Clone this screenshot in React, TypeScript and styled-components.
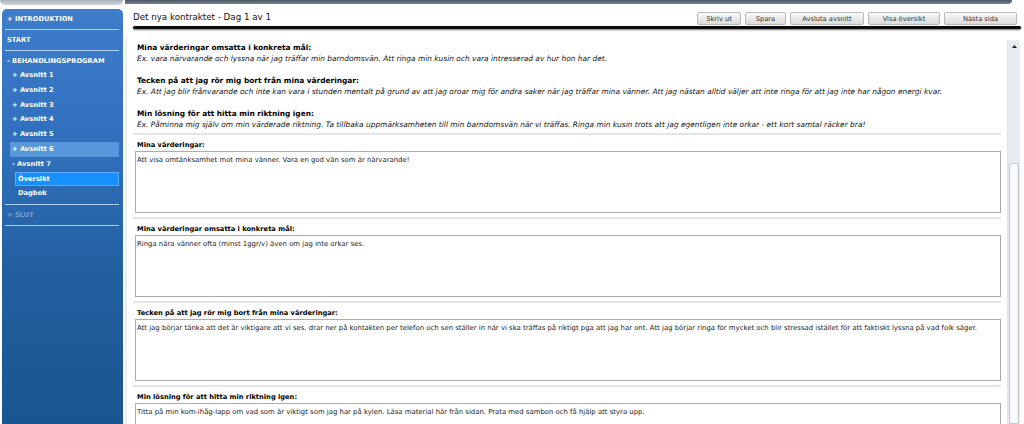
import React from "react";
import styled, { createGlobalStyle } from "styled-components";

const GlobalStyle = createGlobalStyle`
  *, *::before, *::after { box-sizing: border-box; }
  html, body { margin: 0; padding: 0; background: #fff; }
  body { font-family: "DejaVu Sans", Verdana, sans-serif; }
`;

const intro = [
	{
		title: "Mina värderingar omsatta i konkreta mål:",
		example:
			"Ex. vara närvarande och lyssna när jag träffar min barndomsvän. Att ringa min kusin och vara intresserad av hur hon har det.",
	},
	{
		title: "Tecken på att jag rör mig bort från mina värderingar:",
		example:
			"Ex. Att jag blir frånvarande och inte kan vara i stunden mentalt på grund av att jag oroar mig för andra saker när jag träffar mina vänner. Att jag nästan alltid väljer att inte ringa för att jag inte har någon energi kvar.",
	},
	{
		title: "Min lösning för att hitta min riktning igen:",
		example:
			"Ex. Påminna mig själv om min värderade riktning. Ta tillbaka uppmärksamheten till min barndomsvän när vi träffas. Ringa min kusin trots att jag egentligen inte orkar - ett kort samtal räcker bra!",
	},
];

const answers = [
	{
		label: "Mina värderingar:",
		text: "Att visa omtänksamhet mot mina vänner. Vara en god vän som är närvarande!",
	},
	{
		label: "Mina värderingar omsatta i konkreta mål:",
		text: "Ringa nära vänner ofta (minst 1ggr/v) även om jag inte orkar ses.",
	},
	{
		label: "Tecken på att jag rör mig bort från mina värderingar:",
		text: "Att jag börjar tänka att det är viktigare att vi ses, drar ner på kontakten per telefon och sen ställer in när vi ska träffas på riktigt pga att jag har ont. Att jag börjar ringa för mycket och blir stressad istället för att faktiskt lyssna på vad folk säger.",
	},
	{
		label: "Min lösning för att hitta min riktning igen:",
		text: "Titta på min kom-ihåg-lapp om vad som är viktigt som jag har på kylen. Läsa material här från sidan. Prata med sambon och få hjälp att styra upp.",
	},
];

const buttons = [
	{ label: "Skriv ut", w: 44 },
	{ label: "Spara", w: 41 },
	{ label: "Avsluta avsnitt", w: 74 },
	{ label: "Visa översikt", w: 72 },
	{ label: "Nästa sida", w: 73 },
];

const App = () => {
	return (
		<>
			<GlobalStyle />
			<Page>
				<LeftColumn>
					<GrayCap />
					<Sidebar>
						<NavTop>+ INTRODUKTION</NavTop>
						<NavDivider />
						<NavTop>START</NavTop>
						<NavDivider />
						<NavGroupHead>- BEHANDLINGSPROGRAM</NavGroupHead>
						<NavGroup>
							{[1, 2, 3, 4, 5, 6].map((n) => (
								<NavSub key={n} $active={n === 6}>
									+ Avsnitt {n}
								</NavSub>
							))}
							<NavSub>- Avsnitt 7</NavSub>
							<NavLeaf $active>Översikt</NavLeaf>
							<NavLeaf>Dagbok</NavLeaf>
						</NavGroup>
						<NavDivider />
						<NavTop $dim>+ SLUT</NavTop>
						<NavDivider />
					</Sidebar>
				</LeftColumn>
				<Main>
					<TopBar />
					<HeaderRow>
						<PageTitle>Det nya kontraktet - Dag 1 av 1</PageTitle>
						<ButtonBar>
							{buttons.map((b) => (
								<ToolButton key={b.label} $w={b.w}>
									{b.label}
								</ToolButton>
							))}
						</ButtonBar>
					</HeaderRow>
					<HeaderRule />
					<ScrollArea>
						<ScrollBody>
							<Intro>
								{intro.map((item, i) => (
									<IntroItem key={i}>
										<IntroHeading>{item.title}</IntroHeading>
										<IntroExample>{item.example}</IntroExample>
									</IntroItem>
								))}
							</Intro>
							<Separator />
							{answers.map((a, i) => (
								<React.Fragment key={i}>
									<Section>
										<SectionLabel>{a.label}</SectionLabel>
										<Answer readOnly value={a.text} />
									</Section>
									<Separator />
								</React.Fragment>
							))}
						</ScrollBody>
						<ScrollTrack>
							<ScrollArrow>
								<svg width="5" height="3" viewBox="0 0 5 3">
									<path d="M0 3 L2.5 0 L5 3 Z" fill="#222" />
								</svg>
							</ScrollArrow>
							<ScrollGap />
							<ScrollThumb />
						</ScrollTrack>
					</ScrollArea>
				</Main>
			</Page>
		</>
	);
};
export default App;

const Page = styled.div`
	display: flex;
	width: 1024px;
	height: 424px;
	overflow: hidden;
	background: #fff;
`;
const LeftColumn = styled.div`
	width: 125px;
	flex-shrink: 0;
	display: flex;
	flex-direction: column;
`;
const GrayCap = styled.div`
	height: 5px;
	margin-right: 2px;
	background: linear-gradient(#aab5be, #cfd5da);
	border-radius: 0 0 5px 5px;
`;
const Sidebar = styled.nav`
	flex: 1;
	margin: 4px 2px 0 2px;
	display: flex;
	flex-direction: column;
	background: linear-gradient(
		180deg,
		#3e7dcc 0%,
		#3170be 30%,
		#225f9f 65%,
		#1a5590 100%
	);
	border-radius: 5px 5px 0 0;
	color: #fff;
	font-size: 6.7px;
	font-weight: bold;
`;
const NavTop = styled.div<{ $dim?: boolean }>`
	height: 20px;
	line-height: 20px;
	padding-left: 5px;
	color: ${(p) => (p.$dim ? "#7fa3d2" : "#fff")};
	white-space: nowrap;
`;
const NavDivider = styled.div`
	height: 1px;
	margin: 0 4px 0 3px;
	background: #b3cdee;
`;
const NavGroupHead = styled.div`
	height: 17px;
	line-height: 20px;
	padding-left: 5px;
	white-space: nowrap;
`;
const NavGroup = styled.div`
	display: flex;
	flex-direction: column;
	padding-bottom: 3px;
`;
const NavSub = styled.div<{ $active?: boolean }>`
	height: 14.8px;
	line-height: 14.8px;
	margin: 0 4px 0 8px;
	padding-left: 2px;
	background: ${(p) => (p.$active ? "#5797dc" : "transparent")};
`;
const NavLeaf = styled.div<{ $active?: boolean }>`
	height: 14.8px;
	line-height: 12.8px;
	margin: 0 4px 0 13px;
	padding-left: 2px;
	border: 1px solid ${(p) => (p.$active ? "#58acff" : "transparent")};
	background: ${(p) => (p.$active ? "#1590fd" : "transparent")};
`;

const Main = styled.div`
	flex: 1;
	min-width: 0;
	display: flex;
	flex-direction: column;
`;
const TopBar = styled.div`
	height: 4px;
	margin-right: 12px;
	background: linear-gradient(#4a5965, #75858f);
	border-radius: 0 0 6px 0;
`;
const HeaderRow = styled.div`
	height: 21px;
	display: flex;
	align-items: flex-end;
	padding: 0 7px 0 8px;
`;
const PageTitle = styled.div`
	margin-right: auto;
	margin-bottom: 2px;
	font-size: 8.7px;
	line-height: 12px;
	color: #111;
	white-space: nowrap;
`;
const ButtonBar = styled.div`
	display: flex;
	gap: 4px;
`;
const ToolButton = styled.div<{ $w: number }>`
	width: ${(p) => p.$w}px;
	height: 13px;
	display: flex;
	align-items: center;
	justify-content: center;
	font-size: 6.7px;
	color: #333;
	border: 1px solid #b7b9bb;
	border-radius: 2px;
	background: linear-gradient(#fbfbfb, #e9e9e9 50%, #dcdcdc);
	white-space: nowrap;
`;
const HeaderRule = styled.div`
	height: 3px;
	margin: 1px 3px 0 8px;
	background: #0c0c0c;
	border-radius: 2px;
	box-shadow: 0 1px 2px rgba(0, 0, 0, 0.55);
`;

const ScrollArea = styled.div`
	flex: 1;
	min-height: 0;
	margin-top: 9px;
	display: flex;
	border-left: 2px solid #e9eff4;
`;
const ScrollBody = styled.div`
	flex: 1;
	min-width: 0;
	overflow: hidden;
	padding: 3.5px 0 0 6px;
`;
const Intro = styled.div`
	padding: 0 0 3.5px 4px;
`;
const IntroItem = styled.div`
	margin-bottom: 11px;
	&:last-child {
		margin-bottom: 0;
	}
`;
const IntroHeading = styled.div`
	font-size: 7.4px;
	line-height: 11px;
	font-weight: bold;
	color: #000;
`;
const IntroExample = styled.div`
	font-size: 7.45px;
	line-height: 11px;
	font-style: italic;
	color: #111;
`;
const Separator = styled.div`
	height: 2px;
	background: #dfe5ea;
`;
const Section = styled.div`
	padding: 5px 0 4px;
`;
const SectionLabel = styled.div`
	padding-left: 4px;
	margin-bottom: 1px;
	font-size: 6.7px;
	line-height: 10px;
	font-weight: bold;
	color: #000;
`;
const Answer = styled.textarea`
	display: block;
	width: calc(100% - 2px);
	height: 62px;
	margin: 0 0 0 2px;
	padding: 3px 1px;
	border: 1px solid #a9adb1;
	border-radius: 0;
	resize: none;
	overflow: hidden;
	outline: none;
	font-family: "DejaVu Sans", Verdana, sans-serif;
	font-size: 6.9px;
	line-height: 10px;
	color: #222;
	background: #fff;
`;

const ScrollTrack = styled.div`
	width: 13px;
	margin: 2px 4px 0 6px;
	display: flex;
	flex-direction: column;
	background: #e7ecf1;
	border-left: 1px solid #dfe5ea;
`;
const ScrollArrow = styled.div`
	height: 13px;
	display: flex;
	align-items: center;
	justify-content: center;
`;
const ScrollGap = styled.div`
	height: 110px;
`;
const ScrollThumb = styled.div`
	flex: 1;
	margin: 0 1px;
	border: 1px solid #c2c9d0;
	border-radius: 2px 2px 0 0;
	background: linear-gradient(90deg, #f1f4f7, #ffffff 50%, #eef2f5);
`;
